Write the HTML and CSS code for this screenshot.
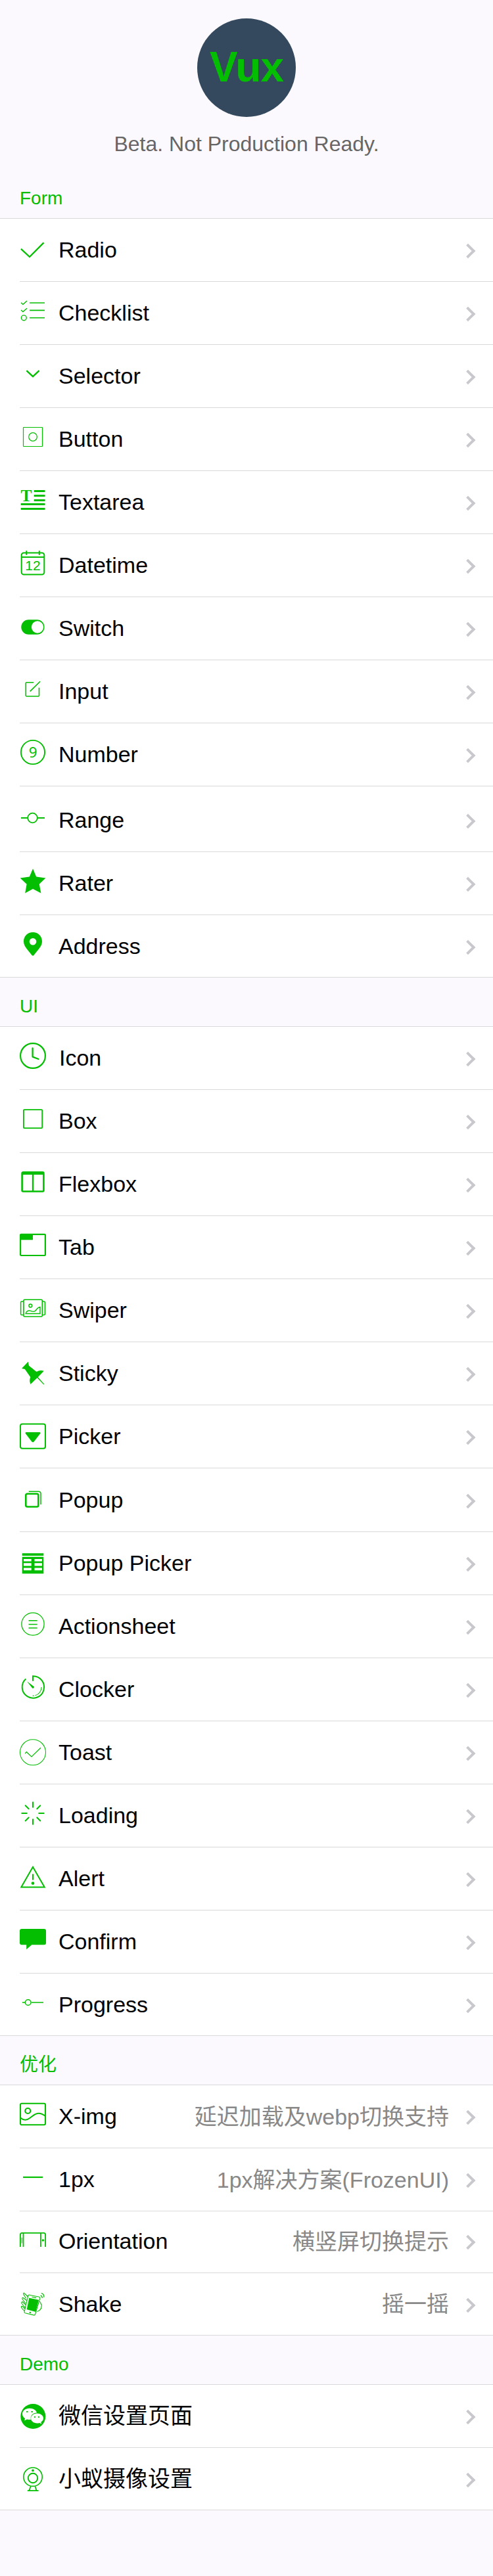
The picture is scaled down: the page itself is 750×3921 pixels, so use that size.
FILE: index.html
```html
<!DOCTYPE html>
<html lang="zh-CN">
<head>
<meta charset="utf-8">
<title>Vux</title>
<link rel="stylesheet" href="styles.css">
</head>
<body>
<header class="hero">
  <div class="logo">Vux</div>
  <p class="tagline">Beta. Not Production Ready.</p>
</header>

<h2 class="title">Form</h2>
<ul class="cells">
  <li class="cell"><svg class="icon" viewBox="0 0 40 44"><path stroke-width="2.3" d="M2 21.8 15 34 36.5 12.4"/></svg><span class="label">Radio</span><i class="arrow"></i></li>
  <li class="cell"><svg class="icon" viewBox="0 0 40 44"><path stroke-width="1.6" d="M15 8H38M15 19.4H38M15 30.7H38"/><path stroke-width="1.4" d="M2 7.8 5 10.3 11 5M2 19 5 21.6 11 16.3"/><circle cx="6.3" cy="30.8" r="3.9" stroke-width="1.4"/></svg><span class="label">Checklist</span><i class="arrow"></i></li>
  <li class="cell"><svg class="icon" viewBox="0 0 40 44"><path stroke-width="2.4" d="M10.4 15.2 20 24.2 29.6 15.2"/></svg><span class="label">Selector</span><i class="arrow"></i></li>
  <li class="cell"><svg class="icon" viewBox="0 0 40 44"><rect x="5.5" y="5.5" width="29" height="29" rx=".5" stroke-width="1.2"/><circle cx="20" cy="20" r="6.3" stroke-width="1.2"/></svg><span class="label">Button</span><i class="arrow"></i></li>
  <li class="cell"><svg class="icon" viewBox="0 0 40 44"><text class="glyph glyph-serif" x="1.4" y="22">T</text><path stroke-width="3" d="M21.7 6.5H38.5M21.7 13.5H38.5M21.7 20.5H38.5M1.7 26.5H38.5M1.7 33.5H38.5"/></svg><span class="label">Textarea</span><i class="arrow"></i></li>
  <li class="cell"><svg class="icon" viewBox="0 0 40 44"><rect x="2.700" y="4.500" width="34.600" height="33" rx="3.500" stroke-width="2"/><path stroke-width="2" d="M2.500 11H37.500M10.200 1.200V7.800M29.800 1.200V7.800"/><text class="glyph glyph-date" x="8.300" y="31.300">12</text></svg><span class="label">Datetime</span><i class="arrow"></i></li>
  <li class="cell"><svg class="icon" viewBox="0 0 40 44"><rect class="fill" x="2.300" y="10.300" width="35.200" height="22.400" rx="11.200"/><ellipse class="hole" cx="27" cy="21.500" rx="9.100" ry="9.200"/></svg><span class="label">Switch</span><i class="arrow"></i></li>
  <li class="cell"><svg class="icon" viewBox="0 0 40 44"><path stroke-width="1.600" d="M21 9.800H10.200Q9.300 9.800 9.300 10.700V29.800Q9.300 30.700 10.200 30.700H28.600Q29.500 30.700 29.500 29.800V17.700M15.700 23.400 31 8.200"/></svg><span class="label">Input</span><i class="arrow"></i></li>
  <li class="cell"><svg class="icon" viewBox="0 0 40 44"><circle cx="20" cy="20" r="18.100" stroke-width="1.900"/><text class="glyph glyph-nine" x="13.700" y="28">9</text></svg><span class="label">Number</span><i class="arrow"></i></li>
  <li class="cell cell-tall"><svg class="icon" viewBox="0 0 40 44"><circle cx="19.500" cy="20" r="7.300" stroke-width="1.700"/><path stroke-width="2" d="M2 20H12M27 20H38"/></svg><span class="label">Range</span><i class="arrow"></i></li>
  <li class="cell"><svg class="icon" viewBox="0 0 40 44"><path class="fill" d="M20 1.300 25.200 13.600 39.400 15.400 29.700 24.800 32.400 38.500 20 32 8.200 38.500 10.600 24.800.6 15.400 14.800 13.600Z"/></svg><span class="label">Rater</span><i class="arrow"></i></li>
  <li class="cell cell-last"><svg class="icon" viewBox="0 0 40 44"><path class="fill" fill-rule="evenodd" d="M20 2C12 2 6 8 6 16 6 24 13.500 30 18.300 36.700Q20 38.900 21.700 36.700C26.500 30 34 24 34 16 34 8 28 2 20 2ZM20 11A5.300 5.300 0 1 1 20 21.600 5.300 5.300 0 1 1 20 11Z"/></svg><span class="label">Address</span><i class="arrow"></i></li>
</ul>

<h2 class="title">UI</h2>
<ul class="cells">
  <li class="cell"><svg class="icon" viewBox="0 0 40 44"><circle cx="20" cy="20" r="18.900" stroke-width="2.200"/><path stroke-width="2.300" stroke-linecap="round" stroke-linejoin="round" d="M19.600 8.500V21.600L28.500 25"/></svg><span class="label label-shift">Icon</span><i class="arrow"></i></li>
  <li class="cell"><svg class="icon" viewBox="0 0 40 44"><rect x="5.900" y="6.100" width="28.300" height="28" rx="1" stroke-width="1.800"/></svg><span class="label">Box</span><i class="arrow"></i></li>
  <li class="cell"><svg class="icon" viewBox="0 0 40 44"><rect x="3.600" y="5.300" width="32.800" height="29.200" rx="1.500" stroke-width="2.600"/><path stroke-width="2.300" d="M20 8V34"/><path stroke-width="4" d="M3.500 7H36.500"/></svg><span class="label">Flexbox</span><i class="arrow"></i></li>
  <li class="cell"><svg class="icon" viewBox="0 0 40 44"><rect x="1.100" y="3.800" width="37.800" height="32.200" rx="1" stroke-width="2.200"/><path class="fill" d="M1 3H20V12.300H1Z"/></svg><span class="label">Tab</span><i class="arrow"></i></li>
  <li class="cell"><svg class="icon" viewBox="0 0 40 44"><rect x="5.900" y="7.300" width="28.400" height="25.700" rx="1.500" stroke-width="1.600"/><path stroke-width="1.500" d="M5.700 10H3Q1.600 10 1.600 11.400V29.200Q1.600 30.600 3 30.600H5.700M34.300 10H37Q38.400 10 38.400 11.400V29.200Q38.400 30.600 37 30.600H34.300"/><circle cx="16.300" cy="16.400" r="2.400" stroke-width="1.400"/><path stroke-width="1.400" d="M9.200 28.500C9.800 25 13 23.300 16 24.200 19 25.200 22 27 24.500 23.500 26.500 20.500 28 18.800 31 18.500V28.500Z"/></svg><span class="label">Swiper</span><i class="arrow"></i></li>
  <li class="cell"><svg class="icon" viewBox="0 0 40 44"><path class="fill" d="M12.800 5.700 14 11.800 25.500 21Q31 17.500 36.800 19.800L27.800 29.300 37.300 39.700 36.400 40.600 26.600 30.200 16.500 40Q14 34.500 16.300 29.300L7.800 17 3 15.900Z"/></svg><span class="label">Sticky</span><i class="arrow"></i></li>
  <li class="cell"><svg class="icon" viewBox="0 0 40 44"><rect x="1" y="4.400" width="38" height="37.400" rx="3" stroke-width="2"/><path class="fill" d="M9.800 17H30.200Q32.200 17.500 31 19.200L21.800 31.300Q20 33.200 18.200 31.300L9 19.200Q7.800 17.500 9.800 17Z"/></svg><span class="label">Picker</span><i class="arrow"></i></li>
  <li class="cell cell-plus"><svg class="icon" viewBox="0 0 40 44"><rect x="9.300" y="14.700" width="19" height="19.800" rx="2.300" stroke-width="2.600"/><path stroke-width="1.500" d="M13.700 11.200H28.500Q32 11.200 32 14.500V31"/></svg><span class="label">Popup</span><i class="arrow"></i></li>
  <li class="cell"><svg class="icon" viewBox="0 0 40 44"><path class="fill" fill-rule="evenodd" d="M3.700 8.300H36.300V12H3.700ZM3.700 13.700H36.300V39.300H3.700ZM6 17V20.400H17.700V17ZM6 23.200V27.600H17.700V23.200ZM6 30.600V34.200H17.700V30.600ZM22.500 17V20.400H34V17ZM22.500 23.200V27.600H34V23.200ZM22.500 30.600V34.200H34V30.600Z"/></svg><span class="label">Popup Picker</span><i class="arrow"></i></li>
  <li class="cell"><svg class="icon" viewBox="0 0 40 44"><circle cx="20" cy="20" r="17.100" stroke-width="1.300"/><path stroke-width="1.500" d="M13.500 14.700H26.700M13.500 20.400H26.700M13.500 26H26.700"/></svg><span class="label">Actionsheet</span><i class="arrow"></i></li>
  <li class="cell"><svg class="icon" viewBox="0 0 40 44"><path stroke-width="2" d="M20 10.700V3.300A16.700 16.700 0 1 1 9.300 7.500"/><path class="fill" d="M11 11.200 21.800 19.200Q22.200 21.500 19.500 22Z"/><path stroke-width="1.100" d="M33.200 20A13.200 13.200 0 0 1 23.500 32.700M22 33 19.500 33.200"/></svg><span class="label">Clocker</span><i class="arrow"></i></li>
  <li class="cell"><svg class="icon" viewBox="0 0 40 44"><circle cx="20" cy="23.300" r="19.500" stroke-width="1.100"/><path stroke-width="1.200" d="M8.200 25 10.300 22.700 18 30 32 16.300"/></svg><span class="label">Toast</span><i class="arrow"></i></li>
  <li class="cell"><svg class="icon" viewBox="0 0 40 44"><path stroke-width="2" stroke-linecap="round" d="M20 3.300V10.800M20 29.200V36.700M3.300 20H10.800M29.200 20H36.700M8.700 8.200 13.700 13.200M31.300 8.200 26.300 13.200M8.700 31.500 13.700 26.500M31.300 31.500 26.300 26.500"/></svg><span class="label">Loading</span><i class="arrow"></i></li>
  <li class="cell"><svg class="icon" viewBox="0 0 40 44"><path stroke-width="2" d="M20 5.800 37.700 36.600H2.300Z"/><path stroke-width="2" d="M20 16.600V25.400"/><circle class="fill" cx="20" cy="30.600" r="2.300"/></svg><span class="label">Alert</span><i class="arrow"></i></li>
  <li class="cell"><svg class="icon" viewBox="0 0 40 44"><path class="fill" d="M3 4H37Q40 4 40 7V25.300Q40 28.300 37 28.300H18.300L10.200 35.300V28.300H3Q0 28.300 0 25.300V7Q0 4 3 4Z"/></svg><span class="label">Confirm</span><i class="arrow"></i></li>
  <li class="cell cell-last"><svg class="icon" viewBox="0 0 40 44"><circle cx="12.700" cy="20" r="4.300" stroke-width="1.400"/><path stroke-width="1.700" d="M4 20H8M18 20H36"/></svg><span class="label">Progress</span><i class="arrow"></i></li>
</ul>

<h2 class="title">优化</h2>
<ul class="cells">
  <li class="cell"><svg class="icon" viewBox="0 0 40 44"><rect x="1" y="3.700" width="38" height="32.600" rx="2" stroke-width="2.100"/><circle cx="12.300" cy="15" r="4" stroke-width="2.200"/><path stroke-width="2" d="M1 25.500C5.500 29.500 10.500 30 16 25.500S27.500 14.500 39 23"/></svg><span class="label">X-img</span><span class="value">延迟加载及webp切换支持</span><i class="arrow"></i></li>
  <li class="cell"><svg class="icon" viewBox="0 0 40 44"><path stroke-width="2.200" d="M5 20H35"/></svg><span class="label">1px</span><span class="value">1px解决方案(FrozenUI)</span><i class="arrow"></i></li>
  <li class="cell cell-short"><svg class="icon" viewBox="0 0 40 44"><path stroke-width="1.800" d="M.9 32V13.500Q.9 10.900 3.500 10.900H36.500Q39.100 10.900 39.100 13.500V32M5.500 11V32M31.900 11V32"/><path stroke-width="1" d="M3.200 18V26.500"/><circle class="fill" cx="35.400" cy="22" r="1.700"/></svg><span class="label">Orientation</span><span class="value">横竖屏切换提示</span><i class="arrow"></i></li>
  <li class="cell cell-last"><svg class="icon" viewBox="0 0 40 44"><path stroke-width="1.100" stroke-linejoin="round" d="M14.500 9.200 29.800 12.300Q31.200 12.800 30.800 14.300L23.500 38.800Q22.900 40.300 21.300 39.900L8.200 36.700Q6.700 36.200 7.100 34.700L12.700 10.300Q13.100 9 14.500 9.200ZM18.500 12.200 25 13.600M12 11.500 6.800 6.300Q5.200 6 5.700 8L9.500 14.500M10.500 17.500 4.800 13.200Q3.300 13.500 4 15.500L8.800 22M9 24 4 19.500Q2.300 20 3 22L8 28.500M7.500 30 3.800 26.200Q1.800 26 2.600 28.500L6.700 33.500M29.500 19.500Q32.500 19.500 31.800 22.500 34.300 24 33 27 33 32 26.500 34.500"/><path class="fill" d="M14.300 13.700 29 16.800 24.300 35 10.700 31.300Z"/><circle class="fill" cx="15.800" cy="36" r="1.200"/><path stroke-width="1.200" d="M31.600 10.200Q34.200 10.600 34.200 14M32.800 6.700Q37 7.500 36.900 12.700"/></svg><span class="label">Shake</span><span class="value">摇一摇</span><i class="arrow"></i></li>
</ul>

<h2 class="title">Demo</h2>
<ul class="cells">
  <li class="cell"><svg class="icon" viewBox="0 0 40 44"><circle class="fill" cx="20.300" cy="24" r="19"/><path class="hole" d="M15 11.700C8.500 11.700 4 15.500 4 20.300 4 23.300 5.500 25.700 8 27.200L7.200 30.400 11 28.500Q14.500 29.500 17 28.800C15.500 22.500 20 18.600 26 18.400 25 14.500 20.500 11.700 15 11.700Z"/><path class="hole" d="M26.300 19.600C21 19.600 17.100 23 17.100 27.100S21 34.500 26.300 34.500Q28.300 34.500 30 33.900L33 35.600 32.300 32.700C34.600 31.300 36 29.400 36 27 36 22.900 31.600 19.600 26.300 19.600Z"/><g class="fill"><ellipse cx="11.300" cy="17" rx="1.500" ry="1.100"/><ellipse cx="18.700" cy="17" rx="1.500" ry="1.100"/><ellipse cx="23" cy="25" rx="1.300" ry="1"/><ellipse cx="29" cy="25" rx="1.300" ry="1"/></g></svg><span class="label">微信设置页面</span><i class="arrow"></i></li>
  <li class="cell cell-last"><svg class="icon" viewBox="0 0 40 44"><circle cx="20" cy="20.200" r="14.200" stroke-width="1.600"/><circle cx="20" cy="22" r="7.200" stroke-width="1.900"/><circle class="fill" cx="20" cy="10.400" r="1.800"/><path stroke-width="1.700" d="M16.800 34 14.400 41M23.200 34 25.600 41M11.800 41.200H28.600"/></svg><span class="label">小蚁摄像设置</span><i class="arrow"></i></li>
</ul>
</body>
</html>
```

FILE: styles.css
```css
* {
  box-sizing: border-box;
}

body {
  margin: 0;
  min-height: 3921px;
  background: #fbf9fe;
  color: #000;
  font-family: "Liberation Sans", "Noto Sans CJK SC", sans-serif;
}

.hero {
  display: flex;
  flex-direction: column;
  align-items: center;
  height: 258px;
  padding-top: 28px;
}

.logo {
  width: 150px;
  height: 150px;
  border-radius: 50%;
  background: #34495e;
  color: #04be02;
  font-size: 64px;
  font-weight: bold;
  letter-spacing: -1px;
  line-height: 148px;
  text-align: center;
}

.tagline {
  margin: 20px 0 0;
  color: #666;
  font-size: 32px;
  line-height: 42px;
}

.title {
  height: 74px;
  margin: 0;
  padding: 24px 30px 0;
  color: #04be02;
  font-size: 28px;
  font-weight: normal;
  line-height: 40px;
}

.cells {
  margin: 0;
  padding: 0;
  list-style: none;
  background: #fff;
  border-top: 1px solid #d9d9d9;
  border-bottom: 1px solid #d9d9d9;
}

.cell {
  display: flex;
  align-items: center;
  height: 96px;
  margin-left: 30px;
  padding: 4px 30px 0 0;
  border-bottom: 1px solid #d9d9d9;
}

.cell-tall {
  height: 100px;
  padding-top: 8px;
}

.cell-plus {
  height: 97px;
}

.cell-short {
  height: 94px;
  padding-top: 2px;
}

.cell-last {
  height: 94px;
  border-bottom: 0;
}

.icon {
  flex: none;
  align-self: flex-start;
  width: 40px;
  height: 44px;
  margin: 20px 19px 0 0;
  overflow: visible;
  fill: none;
  stroke: #04be02;
}

.fill {
  fill: #04be02;
  stroke: none;
}

.hole {
  fill: #fff;
  stroke: none;
}

.glyph {
  fill: #04be02;
  stroke: none;
}

.glyph-serif {
  font: bold 25.5px "Liberation Serif", serif;
}

.glyph-date {
  font: 21px "Liberation Sans", sans-serif;
}

.glyph-nine {
  font: 22.5px "Noto Sans", sans-serif;
}

.label {
  flex: 1;
  margin-bottom: 5px;
  font-size: 34px;
  line-height: 48px;
  white-space: nowrap;
}

.label-shift {
  padding-left: 1px;
}

.value {
  margin: 0 21px 4px 0;
  color: #888;
  font-size: 34px;
  line-height: 48px;
  white-space: nowrap;
}

.arrow {
  flex: none;
  width: 16px;
  height: 16px;
  margin-bottom: 1px;
  border: solid #c8c8cd;
  border-width: 4px 4px 0 0;
  transform: rotate(45deg);
}
```
